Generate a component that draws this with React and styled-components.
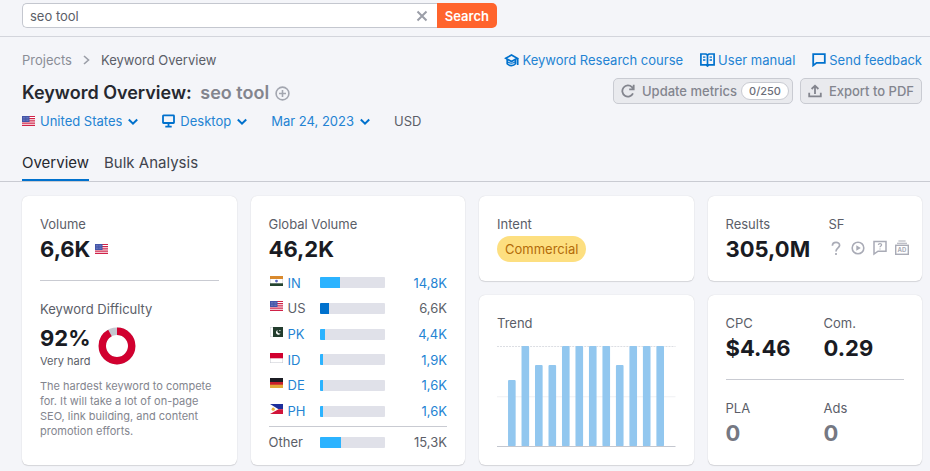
import { useState } from 'react';
import styled, { createGlobalStyle } from 'styled-components';

const countries = [
  { code: 'IN', volume: '14,8K', share: 32 },
  { code: 'US', volume: '6,6K', share: 15, current: true },
  { code: 'PK', volume: '4,4K', share: 9 },
  { code: 'ID', volume: '1,9K', share: 5 },
  { code: 'DE', volume: '1,6K', share: 5 },
  { code: 'PH', volume: '1,6K', share: 5 },
];

const trend = [66, 100, 81, 81, 100, 100, 100, 100, 81, 100, 100, 100];

export default function App() {
  const [keyword, setKeyword] = useState('seo tool');

  return (
    <>
      <GlobalStyle />
      <TopBar>
        <SearchForm onSubmit={(e) => e.preventDefault()}>
          <SearchField>
            <SearchInput aria-label='Keyword' value={keyword} onChange={(e) => setKeyword(e.target.value)} />
            <ClearButton type='button' aria-label='Clear' onClick={() => setKeyword('')}>
              <CloseIcon />
            </ClearButton>
          </SearchField>
          <SearchButton type='submit'>Search</SearchButton>
        </SearchForm>
      </TopBar>

      <Header>
        <div>
          <Breadcrumbs aria-label='Breadcrumb'>
            <Crumb href='#projects'>Projects</Crumb>
            <ChevronRight />
            <span>Keyword Overview</span>
          </Breadcrumbs>
          <TitleRow>
            <Title>
              Keyword Overview: <Muted>seo tool</Muted>
            </Title>
            <IconButton type='button' aria-label='Add to keyword list'>
              <PlusIcon />
            </IconButton>
          </TitleRow>
          <Filters>
            <Filter label='Database' icon={<Flag code='US' />} options={['United States', 'Germany', 'India']} />
            <Filter label='Device' icon={<DesktopIcon />} options={['Desktop', 'Mobile']} />
            <Filter label='Date' options={['Mar 24, 2023', 'Mar 23, 2023']} />
            <span>USD</span>
          </Filters>
        </div>
        <HeaderSide>
          <HelpLinks>
            <HelpLink href='#course'>
              <CourseIcon />
              Keyword Research course
            </HelpLink>
            <HelpLink href='#manual'>
              <ManualIcon />
              User manual
            </HelpLink>
            <HelpLink href='#feedback'>
              <FeedbackIcon />
              Send feedback
            </HelpLink>
          </HelpLinks>
          <Actions>
            <ActionButton type='button' $counted>
              <RefreshIcon />
              Update metrics
              <Counter>0/250</Counter>
            </ActionButton>
            <ActionButton type='button'>
              <ExportIcon />
              Export to PDF
            </ActionButton>
          </Actions>
        </HeaderSide>
      </Header>

      <Tabs>
        <Tab href='#overview' aria-current='page' $active>
          Overview
        </Tab>
        <Tab href='#bulk'>Bulk Analysis</Tab>
      </Tabs>

      <Cards>
        <TallCard>
          <Label>Volume</Label>
          <ValueRow>
            <Value>6,6K</Value>
            <Flag code='US' />
          </ValueRow>
          <Divider />
          <Label>Keyword Difficulty</Label>
          <Difficulty>
            <div>
              <Value>92%</Value>
              <Level>Very hard</Level>
            </div>
            <Donut percent={92} />
          </Difficulty>
          <Description>
            The hardest keyword to compete for. It will take a lot of on-page SEO, link building, and content promotion efforts.
          </Description>
        </TallCard>

        <TallCard $compact>
          <Label>Global Volume</Label>
          <Value>46,2K</Value>
          <VolumeTable aria-label='Global volume by country'>
            <tbody>
              {countries.map((c) => (
                <tr key={c.code}>
                  <th scope='row'>
                    <CountryCell>
                      <Flag code={c.code} />
                      {c.current ? c.code : <a href={`#${c.code}`}>{c.code}</a>}
                    </CountryCell>
                  </th>
                  <td>
                    <Track>
                      <Fill $current={c.current} style={{ width: `${c.share}%` }} />
                    </Track>
                  </td>
                  <td>{c.current ? c.volume : <a href={`#${c.code}`}>{c.volume}</a>}</td>
                </tr>
              ))}
            </tbody>
            <tfoot>
              <tr>
                <th scope='row'>Other</th>
                <td>
                  <Track>
                    <Fill style={{ width: '33%' }} />
                  </Track>
                </td>
                <td>15,3K</td>
              </tr>
            </tfoot>
          </VolumeTable>
        </TallCard>

        <Card>
          <Label>Intent</Label>
          <Badge>Commercial</Badge>
        </Card>

        <Card>
          <Pair $wide>
            <div>
              <Label>Results</Label>
              <Value>305,0M</Value>
            </div>
            <div>
              <Label>SF</Label>
              <Features>
                <QuestionIcon />
                <VideoIcon />
                <FaqIcon />
                <AdIcon />
              </Features>
            </div>
          </Pair>
        </Card>

        <Card>
          <Label>Trend</Label>
          <TrendChart />
        </Card>

        <Card>
          <Pair>
            <div>
              <Label>CPC</Label>
              <Value>$4.46</Value>
            </div>
            <div>
              <Label>Com.</Label>
              <Value>0.29</Value>
            </div>
          </Pair>
          <Divider />
          <Pair>
            <div>
              <Label>PLA</Label>
              <Value $muted>0</Value>
            </div>
            <div>
              <Label>Ads</Label>
              <Value $muted>0</Value>
            </div>
          </Pair>
        </Card>
      </Cards>
    </>
  );
}

function Filter({ label, icon, options }) {
  return (
    <FilterWrap>
      {icon}
      <SelectWrap>
        <Select aria-label={label}>
          {options.map((o) => (
            <option key={o}>{o}</option>
          ))}
        </Select>
        <ChevronDown />
      </SelectWrap>
    </FilterWrap>
  );
}

function Donut({ percent }) {
  return (
    <svg width='38' height='38' viewBox='0 0 38 38' fill='none' strokeWidth='7.4'>
      <circle cx='19' cy='19' r='14.7' stroke='#c4c7cf' />
      <circle cx='19' cy='19' r='14.7' stroke='#d1002f' pathLength='100' strokeDasharray={`${percent} 100`} transform='rotate(-90 19 19)' />
    </svg>
  );
}

function TrendChart() {
  return (
    <Chart viewBox='0 0 178 102' role='img' aria-label='Trend over 12 months'>
      <path d='M0 1.5H178' stroke='#dcdee3' strokeDasharray='2 1' />
      <path d='M0 51.5H178' stroke='#eff0f3' />
      {trend.map((t, i) => (
        <rect key={i} x={11 + i * 13.45} y={101 - t} width='7.6' height={t} rx='1' fill='#92c7ef' />
      ))}
      <path d='M0 101.3H178' stroke='#c4c7cf' />
    </Chart>
  );
}

function Flag({ code }) {
  return (
    <svg width='13' height='10' viewBox='0 0 13 10' aria-hidden='true'>
      {code === 'US' && (
        <>
          <rect width='13' height='10' fill='#fff' />
          <path d='M0 .5H13M0 2.7H13M0 4.9H13M0 7.1H13M0 9.4H13' stroke='#d02248' strokeWidth='1.2' />
          <rect width='7.5' height='6' fill='#4355a8' />
          <path d='M1 1.5H7M1 3H7M1 4.5H7' stroke='#a3addc' strokeWidth='.5' strokeDasharray='.7 .7' />
        </>
      )}
      {code === 'IN' && (
        <>
          <rect x='.25' y='.25' width='12.5' height='9.5' fill='#fff' stroke='#c4c7cf' strokeWidth='.5' />
          <rect width='13' height='3' fill='#d98a2e' />
          <rect y='7.3' width='13' height='2.7' fill='#24442f' />
          <circle cx='6.5' cy='5.1' r='1.4' fill='#5564bd' />
        </>
      )}
      {code === 'PK' && (
        <>
          <rect x='.25' y='.25' width='12.5' height='9.5' fill='#fff' stroke='#c4c7cf' strokeWidth='.5' />
          <rect x='3' width='10' height='10' fill='#233d2e' />
          <path d='M7.6 3.1a2.4 2.4 0 1 0 3 3.2a2.3 2.3 0 0 1-3-3.2z' fill='#fff' />
          <circle cx='9.9' cy='3.6' r='.7' fill='#fff' />
        </>
      )}
      {code === 'ID' && (
        <>
          <rect x='.25' y='.25' width='12.5' height='9.5' fill='#fff' stroke='#c4c7cf' strokeWidth='.5' />
          <rect width='13' height='5.3' fill='#d1002f' />
        </>
      )}
      {code === 'DE' && (
        <>
          <rect width='13' height='10' fill='#1c1d24' />
          <rect y='4' width='13' height='3' fill='#c81e2b' />
          <rect y='6.7' width='13' height='3.3' fill='#e2a93a' />
        </>
      )}
      {code === 'PH' && (
        <>
          <rect width='13' height='5.2' fill='#1d2f9b' />
          <rect y='5.2' width='13' height='4.8' fill='#d1143a' />
          <path d='M0 0L8.5 5.2L0 10z' fill='#fff' />
          <circle cx='3.2' cy='5.2' r='1.6' fill='#e9b33c' />
        </>
      )}
    </svg>
  );
}

const CloseIcon = () => (
  <svg width='12' height='12' viewBox='0 0 12 12' stroke='#9b9ea8' strokeWidth='2'>
    <path d='M1.5 1.5L10.5 10.5M10.5 1.5L1.5 10.5' />
  </svg>
);

const ChevronRight = () => (
  <svg width='7' height='10' viewBox='0 0 7 10' fill='none' stroke='#9b9ea8' strokeWidth='1.6'>
    <path d='M1 1L5.5 5L1 9' />
  </svg>
);

const PlusIcon = () => (
  <svg width='15' height='15' viewBox='0 0 15 15' fill='none' stroke='#a3a6b0' strokeWidth='1.6'>
    <circle cx='7.5' cy='7.5' r='6.4' />
    <path d='M7.5 4V11M4 7.5H11' />
  </svg>
);

const DesktopIcon = () => (
  <svg width='13' height='14' viewBox='0 0 13 14' fill='none' stroke='#0071cd' strokeWidth='1.8'>
    <rect x='1' y='1.4' width='11' height='7.6' rx='.5' />
    <path d='M6.5 9V12M3.3 12.6H9.7' />
  </svg>
);

const CourseIcon = () => (
  <svg width='15' height='14' viewBox='0 0 15 14' fill='none' stroke='#0071cd' strokeWidth='1.7'>
    <path d='M1.8 5.3L7.5 2L13.2 5.3L7.5 8.6z' />
    <path d='M3.2 6.2V10.8C5.4 13.2 9.4 13.2 11.5 10.8V6.6M13.7 5V12' />
    <path d='M3.4 8.6C5.6 10.8 9.2 10.8 11.4 8.6' strokeWidth='1.2' />
  </svg>
);

const ManualIcon = () => (
  <svg width='15' height='14' viewBox='0 0 15 14' fill='none' stroke='#0071cd' strokeWidth='1.7'>
    <path d='M.9 1H6L7.5 2L9 1H14.1V11.8H9L7.5 13L6 11.8H.9zM7.5 2V13' />
    <path d='M3 4.2H5.4M3 7H5.4M9.6 4.2H12M9.6 7H12' strokeWidth='1.3' />
  </svg>
);

const FeedbackIcon = () => (
  <svg width='14' height='14' viewBox='0 0 14 14' fill='none' stroke='#0071cd' strokeWidth='1.8'>
    <path d='M1.2 1.2H12.8V9.8H4.6L1.2 12.4z' />
  </svg>
);

const RefreshIcon = () => (
  <svg width='14' height='14' viewBox='0 0 14 14' fill='none' stroke='currentColor' strokeWidth='1.8'>
    <path d='M12 9.4A5.6 5.6 0 1 1 11 3.2L12.4 4.9M12.7 .8V5.3H8.2' />
  </svg>
);

const ExportIcon = () => (
  <svg width='14' height='14' viewBox='0 0 14 14' fill='none' stroke='currentColor' strokeWidth='1.8'>
    <path d='M1.2 8.8V12.4H12.8V8.8M7 10V2M3.6 5L7 1.7L10.4 5' />
  </svg>
);

const QuestionIcon = () => (
  <svg width='14' height='16' viewBox='0 0 14 16' fill='none' stroke='#a9abb6' strokeWidth='1.7'>
    <path d='M3.4 5.8C3.4 1.2 10.8 1.4 10.6 5.4C10.5 8 7 7.8 7 11.4M7 13V15' />
  </svg>
);

const VideoIcon = () => (
  <svg width='14' height='16' viewBox='0 0 14 16' fill='none' stroke='#a9abb6' strokeWidth='1.6'>
    <circle cx='7' cy='8' r='5.8' />
    <path d='M5.3 5.2L9.8 8L5.3 10.8z' fill='#a9abb6' stroke='none' />
  </svg>
);

const FaqIcon = () => (
  <svg width='14' height='16' viewBox='0 0 14 16' fill='none' stroke='#a9abb6' strokeWidth='1.5'>
    <path d='M1 1.5H13V11.2H5L1 14z' />
    <path d='M5.3 4.9C5.5 3.2 8.8 3.3 8.6 5C8.5 6 7 6.2 7 7.3M7 8.4V9.5' strokeWidth='1.2' />
  </svg>
);

const AdIcon = () => (
  <svg width='14' height='16' viewBox='0 0 14 16' fill='none' stroke='#a9abb6'>
    <path d='M3.4 1H10.6M2 3.2H12' strokeWidth='1.1' />
    <rect x='.7' y='5.3' width='12.6' height='9' strokeWidth='1.4' />
    <text x='7' y='12' textAnchor='middle' fontSize='6' fontWeight='700' fill='#a9abb6' stroke='none'>
      AD
    </text>
  </svg>
);

const ChevronDown = () => (
  <ChevronSvg width='10' height='8' viewBox='0 0 10 8' fill='none' stroke='#0071cd' strokeWidth='2'>
    <path d='M.8 1.5L5 5.7L9.2 1.5' />
  </ChevronSvg>
);

const GlobalStyle = createGlobalStyle`
  * {
    box-sizing: border-box;
  }

  body {
    margin: 0;
    background-color: #f4f5f9;
    color: #5b5e68;
    font-family: Inter, 'Liberation Sans', sans-serif;
    font-size: 13px;
    line-height: 20px;
  }

  a {
    color: #2383d3;
    text-decoration: none;
  }

  button,
  input,
  select {
    font: inherit;
  }

  svg {
    display: block;
    flex-shrink: 0;
  }
`;

const TopBar = styled.div`
  padding: 3px 8px 8px 22px;
  border-bottom: 1px solid #d3d5dc;
`;

const SearchForm = styled.form`
  display: flex;
  max-width: 475px;
`;

const SearchField = styled.div`
  display: flex;
  flex: 1;
  align-items: center;
  height: 25px;
  background-color: #fff;
  border: 1px solid #c4c7cf;
  border-right: none;
  border-radius: 5px 0 0 5px;
`;

const SearchInput = styled.input`
  flex: 1;
  min-width: 0;
  padding: 0 7px;
  border: none;
  outline: none;
  background: none;
  color: #5b5e68;
`;

const ClearButton = styled.button`
  padding: 0 9px;
  border: none;
  background: none;
  cursor: pointer;
`;

const SearchButton = styled.button`
  padding: 0 8px;
  border: none;
  border-radius: 0 5px 5px 0;
  background-color: #ff642d;
  color: #fff;
  font-weight: 600;
  cursor: pointer;
`;

const Header = styled.header`
  display: flex;
  justify-content: space-between;
  padding: 13px 8px 14px 22px;
`;

const Breadcrumbs = styled.nav`
  display: flex;
  align-items: center;
  gap: 11px;
  margin-bottom: 9px;
`;

const Crumb = styled.a`
  color: #8a8d97;
`;

const TitleRow = styled.div`
  display: flex;
  align-items: center;
  gap: 6px;
  margin-bottom: 4px;
`;

const Title = styled.h1`
  margin: 0;
  color: #26282f;
  font-size: 18px;
  font-weight: 600;
  line-height: 28px;
`;

const Muted = styled.span`
  margin-left: 4px;
  color: #83858e;
`;

const IconButton = styled.button`
  padding: 0;
  border: none;
  background: none;
  cursor: pointer;
`;

const Filters = styled.div`
  display: flex;
  align-items: center;
  gap: 24px;
`;

const FilterWrap = styled.div`
  display: flex;
  align-items: center;
  gap: 5px;
`;

const SelectWrap = styled.div`
  position: relative;
`;

const Select = styled.select`
  display: block;
  field-sizing: content;
  appearance: none;
  height: 20px;
  padding: 0 16px 0 0;
  border: none;
  outline: none;
  background: none;
  color: #2383d3;
  cursor: pointer;
`;

const ChevronSvg = styled.svg`
  position: absolute;
  right: 0;
  top: 7px;
  pointer-events: none;
`;

const HeaderSide = styled.div`
  display: flex;
  flex-direction: column;
  align-items: flex-end;
  gap: 8px;
`;

const HelpLinks = styled.div`
  display: flex;
  gap: 17px;
`;

const HelpLink = styled.a`
  display: flex;
  align-items: center;
  gap: 3px;
`;

const Actions = styled.div`
  display: flex;
  gap: 7px;
`;

const ActionButton = styled.button`
  display: flex;
  align-items: center;
  gap: 7px;
  height: 26px;
  padding: ${({ $counted }) => ($counted ? '0 3px 0 7px' : '0 7px')};
  border: 1px solid #c9cbd2;
  border-radius: 5px;
  background-color: #e9eaee;
  color: #83858e;
  font-weight: 500;
  cursor: pointer;
`;

const Counter = styled.span`
  margin-left: -3px;
  padding: 0 7px;
  border: 1px solid #c9cbd2;
  border-radius: 9px;
  background-color: #fff;
  color: #6c6e79;
  font-size: 11px;
  line-height: 16px;
`;

const Tabs = styled.nav`
  display: flex;
  gap: 15px;
  padding-left: 22px;
  border-bottom: 1px solid #c9cbd2;
`;

const Tab = styled.a`
  height: 36px;
  color: ${({ $active }) => ($active ? '#26282f' : '#41444d')};
  font-size: 15px;
  line-height: 36px;
  box-shadow: ${({ $active }) => ($active ? 'inset 0 -2px #0071cd' : 'none')};
`;

const Cards = styled.main`
  display: grid;
  grid-template-columns: repeat(4, 1fr);
  grid-template-rows: auto 1fr;
  gap: 14px;
  padding: 14px 8px 6px 22px;
`;

const Card = styled.section`
  min-width: 0;
  padding: 18px 18px 17px;
  border-radius: 6px;
  background-color: #fff;
  box-shadow: 0 0 1px rgba(25, 27, 35, 0.2), 0 1px 1px rgba(25, 27, 35, 0.12);
`;

const TallCard = styled(Card)`
  display: flex;
  flex-direction: column;
  grid-row: span 2;
  padding-bottom: ${({ $compact }) => ($compact ? '8px' : '17px')};
`;

const Label = styled.div`
  line-height: 20px;
`;

const Value = styled.div`
  color: ${({ $muted }) => ($muted ? '#757882' : '#191b23')};
  font-size: 22px;
  font-weight: 700;
  line-height: 30px;
`;

const ValueRow = styled.div`
  display: flex;
  align-items: center;
  gap: 5px;
`;

const Divider = styled.hr`
  width: 100%;
  margin: 16px 0 18px;
  border: none;
  border-top: 1px solid #c9cbd2;
`;

const Difficulty = styled.div`
  display: flex;
  align-items: center;
  gap: 7px;
  margin: 4px 0 10px;
`;

const Level = styled.div`
  font-size: 11px;
  line-height: 16px;
`;

const Description = styled.p`
  margin: 0;
  color: #83858e;
  font-size: 11px;
  line-height: 15px;
`;

const VolumeTable = styled.table`
  display: flex;
  flex: 1;
  flex-direction: column;
  margin-top: 6px;

  tbody {
    display: grid;
    flex: 1;
    grid-auto-rows: 1fr;
  }

  tfoot {
    margin-top: 2px;
    padding: 5px 0;
    border-top: 1px solid #c9cbd2;
  }

  tr {
    display: grid;
    grid-template-columns: 51px 65px 1fr;
    align-items: center;
  }

  th,
  td {
    padding: 0;
    font-weight: 400;
    text-align: left;
  }

  td:last-child {
    text-align: right;
  }
`;

const CountryCell = styled.div`
  display: flex;
  gap: 5px;
  padding-left: 1px;

  svg {
    margin-top: 3px;
  }
`;

const Track = styled.div`
  height: 11px;
  border-radius: 1px;
  background-color: #e0e1e9;
  overflow: hidden;
`;

const Fill = styled.div`
  height: 100%;
  background-color: ${({ $current }) => ($current ? '#0071cd' : '#2bb3ff')};
`;

const Badge = styled.span`
  display: inline-block;
  margin-top: 2px;
  padding: 0 8px;
  border-radius: 13px;
  background-color: #fddf80;
  color: #b36b09;
  line-height: 26px;
`;

const Pair = styled.div`
  display: grid;
  grid-template-columns: ${({ $wide }) => ($wide ? '103px 1fr' : '98px 1fr')};
`;

const Features = styled.div`
  display: flex;
  gap: 8px;
  margin-top: 6px;
`;

const Chart = styled.svg`
  width: 100%;
  margin-top: 12px;
`;
